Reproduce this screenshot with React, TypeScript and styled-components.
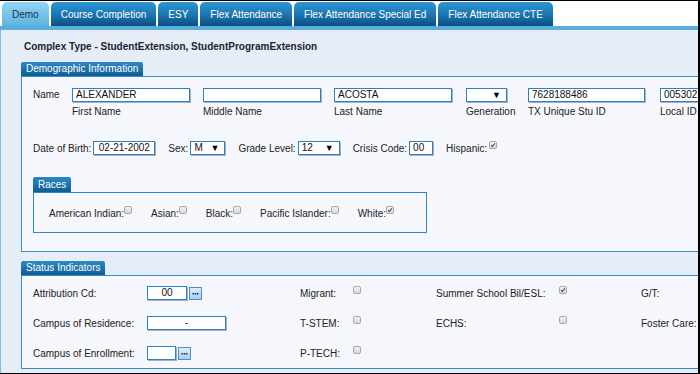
import styled, { createGlobalStyle } from "styled-components";

const GlobalStyle = createGlobalStyle`
  body {
    margin: 0;
    font-family: "Liberation Sans", Arial, sans-serif;
    font-size: 10px;
    color: #222;
  }
`;

const tabs = [
  "Demo",
  "Course Completion",
  "ESY",
  "Flex Attendance",
  "Flex Attendance Special Ed",
  "Flex Attendance CTE",
];

const Check = ({ checked }: { checked?: boolean }) => (
  <Box>
    {checked && (
      <svg width="8" height="8" viewBox="0 0 8 8">
        <path d="M1.5 4.2 L3.2 6 L6.6 1.6" fill="none" stroke="#444" strokeWidth="1.4" />
      </svg>
    )}
  </Box>
);

const Dots = () => (
  <DotButton>
    <svg width="11" height="11" viewBox="0 0 11 11">
      <rect x="2.5" y="5" width="1.5" height="1.5" fill="#1a2a40" />
      <rect x="4.75" y="5" width="1.5" height="1.5" fill="#1a2a40" />
      <rect x="7" y="5" width="1.5" height="1.5" fill="#1a2a40" />
    </svg>
  </DotButton>
);

export default function App() {
  return (
    <>
      <GlobalStyle />
      <Frame>
        <TabBar>
          {tabs.map((t, i) => (
            <Tab key={t} $active={i === 0}>
              {t}
            </Tab>
          ))}
        </TabBar>
        <Band />
        <Content>
          <Heading>Complex Type - StudentExtension, StudentProgramExtension</Heading>

          <PanelTitle>Demographic Information</PanelTitle>
          <Panel>
            <NameRow>
              <NameLabel>Name</NameLabel>
              <Field $w={131}>
                <Input $w={118}>ALEXANDER</Input>
                <Caption>First Name</Caption>
              </Field>
              <Field $w={131}>
                <Input $w={118} />
                <Caption>Middle Name</Caption>
              </Field>
              <Field $w={132}>
                <Input $w={118}>ACOSTA</Input>
                <Caption>Last Name</Caption>
              </Field>
              <Field $w={62}>
                <Select $w={41}>
                  <span />
                  <Arrow>▼</Arrow>
                </Select>
                <Caption>Generation</Caption>
              </Field>
              <Field $w={132}>
                <Input $w={117}>7628188486</Input>
                <Caption>TX Unique Stu ID</Caption>
              </Field>
              <Field $w={60}>
                <Input $w={60}>0053021</Input>
                <Caption>Local ID</Caption>
              </Field>
            </NameRow>

            <InfoRow>
              <Group>
                <span>Date of Birth:</span>
                <Input $w={62} $center>02-21-2002</Input>
              </Group>
              <Group>
                <span>Sex:</span>
                <Select $w={35}>
                  <span>M</span>
                  <Arrow>▼</Arrow>
                </Select>
              </Group>
              <Group>
                <span>Grade Level:</span>
                <Select $w={42}>
                  <span>12</span>
                  <Arrow>▼</Arrow>
                </Select>
              </Group>
              <Group>
                <span>Crisis Code:</span>
                <Input $w={24}>00</Input>
              </Group>
              <Group>
                <span>Hispanic:</span>
                <Check checked />
              </Group>
            </InfoRow>

            <SubTitle>Races</SubTitle>
            <RaceBox>
              <RaceItem>
                American Indian:
                <Check />
              </RaceItem>
              <RaceItem>
                Asian:
                <Check />
              </RaceItem>
              <RaceItem>
                Black:
                <Check />
              </RaceItem>
              <RaceItem>
                Pacific Islander:
                <Check />
              </RaceItem>
              <RaceItem>
                White:
                <Check checked />
              </RaceItem>
            </RaceBox>
          </Panel>

          <PanelTitle $top={9}>Status Indicators</PanelTitle>
          <StatusPanel>
            <span>Attribution Cd:</span>
            <Group>
              <Input $w={40} $center>00</Input>
              <Dots />
            </Group>
            <span>Migrant:</span>
            <Check />
            <span>Summer School Bil/ESL:</span>
            <Check checked />
            <span>G/T:</span>

            <span>Campus of Residence:</span>
            <Input $w={79} $center>-</Input>
            <span>T-STEM:</span>
            <Check />
            <span>ECHS:</span>
            <Check />
            <span>Foster Care:</span>

            <span>Campus of Enrollment:</span>
            <Group>
              <Input $w={29} />
              <Dots />
            </Group>
            <span>P-TECH:</span>
            <Check />
            <span />
            <span />
            <span />
          </StatusPanel>
        </Content>
      </Frame>
    </>
  );
}

const Frame = styled.div`
  width: 700px;
  height: 374px;
  box-sizing: border-box;
  border-top: 1px solid #000;
  border-right: 2px solid #000;
  border-bottom: 1px solid #000;
  background: #fff;
  display: flex;
  flex-direction: column;
  overflow: hidden;
`;

const TabBar = styled.div`
  display: flex;
  gap: 2px;
  padding: 1px 0 0 2px;
  height: 25px;
  box-sizing: border-box;
  flex-shrink: 0;
  align-items: flex-end;
`;

const Tab = styled.div<{ $active?: boolean }>`
  height: 24px;
  padding: 0 10px;
  display: flex;
  align-items: center;
  border-radius: 5px 5px 0 0;
  white-space: nowrap;
  font-size: 10px;
  color: ${(p) => (p.$active ? "#17315a" : "#fff")};
  background: ${(p) =>
    p.$active
      ? "linear-gradient(#93d4f3, #5eb4de)"
      : "linear-gradient(#2f97d5, #1a74b2 55%, #0a4f80)"};
`;

const Band = styled.div`
  height: 4px;
  background: #5aaedb;
  flex-shrink: 0;
`;

const Content = styled.div`
  flex: 1;
  background: #e6edf7;
  border-left: 1px solid #6cc2e8;
  padding: 11px 0 0 20px;
  display: flex;
  flex-direction: column;
  align-items: flex-start;
  overflow: hidden;
`;

const Heading = styled.div`
  font-weight: bold;
  color: #1b2333;
  padding-left: 3px;
  margin-bottom: 10px;
`;

const PanelTitle = styled.div<{ $top?: number }>`
  margin-top: ${(p) => p.$top ?? 0}px;
  height: 14px;
  line-height: 14px;
  padding: 0 5px;
  color: #fff;
  font-size: 10px;
  background: linear-gradient(#2c89c7, #0f5d92);
  border-radius: 2px 2px 0 0;
`;

const Panel = styled.div`
  width: 700px;
  box-sizing: border-box;
  border: 1px solid #3a8ac6;
  background: #f5f7fc;
  padding: 11px 0 18px 11px;
  display: flex;
  flex-direction: column;
  align-items: flex-start;
`;

const NameRow = styled.div`
  display: flex;
  align-items: flex-start;
  white-space: nowrap;
`;

const NameLabel = styled.div`
  width: 39px;
  height: 14px;
  line-height: 14px;
`;

const Field = styled.div<{ $w: number }>`
  display: flex;
  flex-direction: column;
  width: ${(p) => p.$w}px;
  flex-shrink: 0;
`;

const Input = styled.div<{ $w: number; $center?: boolean }>`
  width: ${(p) => p.$w}px;
  height: 14px;
  box-sizing: border-box;
  border: 1px solid #2f80c2;
  box-shadow: 1px 1px 0 #a9b0b8;
  background: #fff;
  color: #111;
  padding: 0 3px;
  line-height: 12px;
  font-size: 10px;
  overflow: hidden;
  white-space: nowrap;
  flex-shrink: 0;
  text-align: ${(p) => (p.$center ? "center" : "left")};
`;

const Select = styled(Input)`
  display: flex;
  justify-content: space-between;
  align-items: center;
  padding: 0 5px 0 3px;
`;

const Arrow = styled.span`
  font-size: 9px;
  color: #000;
`;

const Caption = styled.div`
  margin-top: 4px;
  line-height: 12px;
`;

const InfoRow = styled.div`
  display: flex;
  align-items: center;
  gap: 13px;
  margin-top: 23px;
  white-space: nowrap;
`;

const Group = styled.div`
  display: flex;
  align-items: center;
  gap: 2px;
`;

const Box = styled.span`
  display: inline-flex;
  align-items: center;
  justify-content: center;
  width: 8px;
  height: 8px;
  box-sizing: border-box;
  border: 1px solid #a8a8a8;
  border-radius: 2px;
  background: linear-gradient(#f2f2f2, #d8d8d8);
  align-self: center;
  margin-top: -6px;
  flex-shrink: 0;
`;

const SubTitle = styled(PanelTitle)`
  margin-top: 22px;
  height: 15px;
  line-height: 15px;
`;

const RaceBox = styled.div`
  width: 394px;
  height: 41px;
  box-sizing: border-box;
  border: 1px solid #2f86c6;
  display: flex;
  align-items: center;
  gap: 19px;
  padding: 1px 0 0 15px;
  white-space: nowrap;
`;

const RaceItem = styled.div`
  display: flex;
  align-items: center;
`;

const StatusPanel = styled(Panel)`
  display: grid;
  grid-template-columns: 114px 153px 53px 83px 123px 82px 1fr;
  grid-template-rows: 30px 30px 30px;
  align-items: center;
  padding: 2px 0 0 11px;
  white-space: nowrap;
`;

const DotButton = styled.span`
  display: flex;
  width: 13px;
  height: 13px;
  box-sizing: border-box;
  border: 1px solid #4a90c8;
  background: linear-gradient(#dcedfa, #a7d0ef);
`;
